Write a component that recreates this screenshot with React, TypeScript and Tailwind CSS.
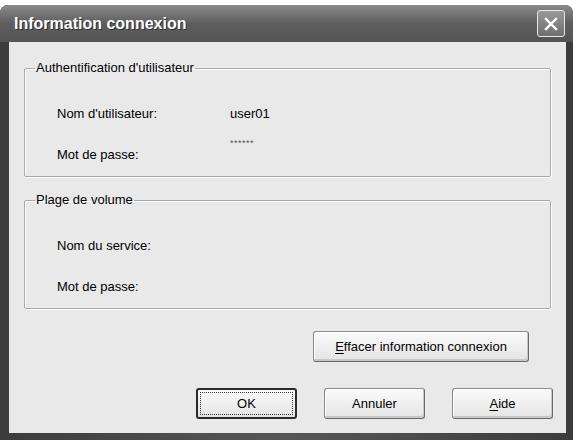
import { Fragment } from "react";

const FONT = "font-['Liberation_Sans',Arial,sans-serif]";

function WinButton({ label, accel, isDefault, className = "" }: { label: string; accel?: number; isDefault?: boolean; className?: string }) {
  // underline the accelerator letter
  const text =
    accel === undefined ? (
      label
    ) : (
      <Fragment>
        {label.slice(0, accel)}
        <span className="underline underline-offset-2">{label[accel]}</span>
        {label.slice(accel + 1)}
      </Fragment>
    );
  return (
    <button
      className={
        "h-[31px] rounded-[3px] text-[13px] text-black bg-gradient-to-b from-[#fbfbfb] to-[#e4e4e4] " +
        (isDefault
          ? "border-2 border-[#2a2a2a] p-[2px] "
          : "border border-[#8c8c8c] border-b-[#6a6a6a] border-r-[#6a6a6a] shadow-[inset_-1px_-2px_0_#c8c8c8,inset_1px_1px_0_#ffffff] ") +
        className
      }
    >
      {isDefault ? (
        <span className="flex h-full w-full items-center justify-center border border-dotted border-[#333]">{text}</span>
      ) : (
        text
      )}
    </button>
  );
}

function Group({ title, rows }: { title: string; rows: { label: string; value?: string; stars?: boolean }[] }) {
  return (
    <fieldset className="mx-[15px] border border-[#a9a9a9] shadow-[1px_1px_0_#ffffff,inset_1px_1px_0_#ffffff] rounded-[2px] pb-[1px]">
      <legend className="ml-[10px] px-[1px] text-[13px] leading-[16px] text-black">{title}</legend>
      <div className="pt-[17px]">
        {rows.map((r) => (
          <div key={r.label + (r.value ?? "")} className="flex h-[41px] items-center pl-[32px]">
            <span className="w-[173px] text-[13px] text-black">{r.label}</span>
            {r.stars ? (
              <span className="-mt-[22px] text-[9px] tracking-[0.5px] text-[#555]">******</span>
            ) : (
              <span className="text-[13px] text-black">{r.value}</span>
            )}
          </div>
        ))}
      </div>
    </fieldset>
  );
}

export default function App() {
  return (
    <div className={"w-[573px] h-[440px] bg-white pt-[5px] " + FONT}>
      <div className="flex h-[435px] flex-col rounded-t-[8px] bg-gradient-to-r from-[#3c3c3c] via-[#575757] to-[#3c3c3c] overflow-hidden">
        {/* title bar */}
        <div className="flex h-[37px] items-center justify-between bg-gradient-to-b from-[#8a8a8a] via-[#5e5e5e] to-[#545454] pl-[14px] pr-[8px]">
          <span className="text-[16px] font-bold text-white [text-shadow:1px_1px_0_#2e2e2e]">Information connexion</span>
          <div className="flex h-[27px] w-[28px] items-center justify-center rounded-[3px] border border-[#e6e6e6] bg-gradient-to-b from-[#9a9a9a] to-[#6e6e6e]">
            <svg width="16" height="16" viewBox="0 0 16 16">
              <path d="M3 3 L13 13 M13 3 L3 13" stroke="#ffffff" strokeWidth="2.4" strokeLinecap="square" />
            </svg>
          </div>
        </div>
        {/* client area */}
        <div className="ml-[9px] mr-[7px] flex-1 bg-[#e9e9e9] pt-[18px]">
          <Group
            title="Authentification d'utilisateur"
            rows={[
              { label: "Nom d'utilisateur:", value: "user01" },
              { label: "Mot de passe:", stars: true },
            ]}
          />
          <div className="h-[15px]" />
          <Group
            title="Plage de volume"
            rows={[
              { label: "Nom du service:" },
              { label: "Mot de passe:" },
            ]}
          />
          <div className="mt-[22px] flex justify-end pr-[37px]">
            <WinButton label="Effacer information connexion" accel={0} className="w-[216px]" />
          </div>
          <div className="mt-[26px] flex justify-end gap-[27px] pr-[13px]">
            <WinButton label="OK" isDefault className="w-[101px]" />
            <WinButton label="Annuler" className="w-[101px]" />
            <WinButton label="Aide" accel={0} className="w-[101px]" />
          </div>
        </div>
        <div className="h-[7px]" />
      </div>
    </div>
  );
}
